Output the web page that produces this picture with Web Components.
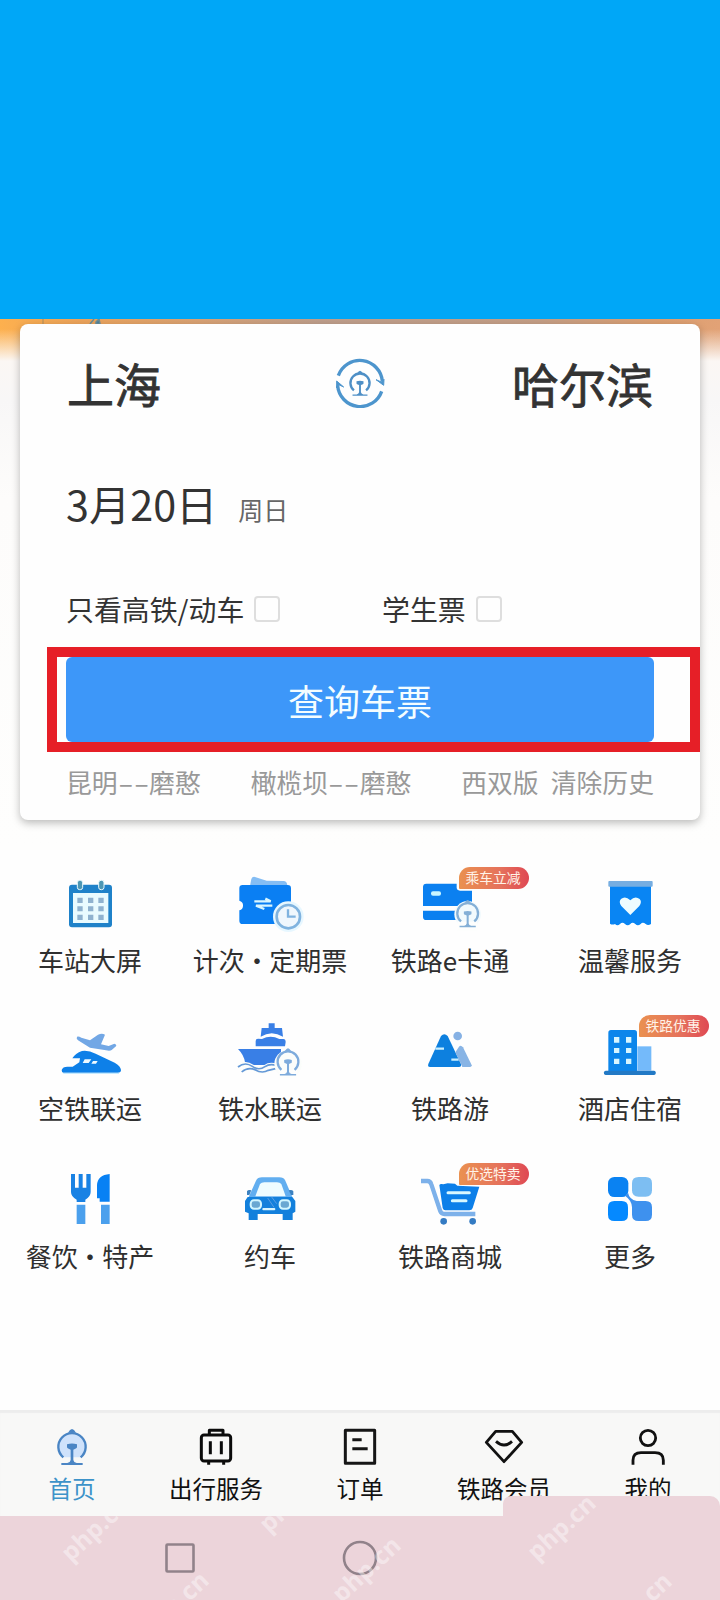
<!DOCTYPE html>
<html lang="zh-CN">
<head>
<meta charset="utf-8">
<title>铁路购票</title>
<style>
html,body{margin:0;padding:0}
body{width:720px;height:1600px;overflow:hidden;background:#fefefe;font-family:"Noto Sans CJK SC","Noto Sans",sans-serif;color:#333}
</style>
</head>
<body>
<rail-app></rail-app>
<script>
const define = (name, html, setup) => {
  const t = document.createElement('template');
  t.innerHTML = html;
  customElements.define(name, class extends HTMLElement {
    constructor() {
      super();
      this.attachShadow({mode: 'open'}).appendChild(t.content.cloneNode(true));
    }
    connectedCallback() { if (setup) setup(this, this.shadowRoot); }
  });
};

/* Railway emblem, drawn round the origin, 90 units wide */
const emblem = (x, y, s, c, fill = 'none', w = 8) => `<g transform="translate(${x} ${y}) scale(${s})" fill="none" stroke="${c}" stroke-width="${w}"><path d="M-26 32A41 41 0 1 1 26 32" fill="${fill}"/><path d="M-12-42Q0-64 12-42Z" fill="${c}" stroke="none"/><path d="M-15-7Q0-12 15-7V2Q15 5 10 6L4 9V40Q5 47 14 49H32V55H-32V49H-14Q-5 47-4 40V9L-10 6Q-15 5-15 2Z" fill="${c}" stroke="none"/></g>`;

const ICONS = {
  calendar: ['150 60', `<rect x="207" y="104" width="129" height="128" rx="9" fill="#1f82c9"/><path d="M219 129H325V219H219Z" fill="#e9fbff"/><g fill="#8fb2cf"><path d="M232 143h16v16h-16zM264 143h16v16h-16zM295 143h16v16h-16zM232 169h16v15h-16zM264 169h16v15h-16zM295 169h16v15h-16zM232 194h16v16h-16zM264 194h16v16h-16zM295 194h16v16h-16z"/></g><g fill="#4d97b4" stroke="#e9fbff" stroke-width="3"><rect x="232" y="91" width="16" height="28" rx="7"/><rect x="296" y="91" width="16" height="28" rx="7"/></g>`],
  tickets: ['690 60', `<path d="M750 108L754 87Q757 79 765 81L800 92L852 93Q862 94 862 108V112H750Z" fill="#84bdf4"/><path d="M728 105H863Q873 105 873 115V222H728Q718 222 718 212V181A15 15 0 0 0 718 152V115Q718 105 728 105Z" fill="#0a7ff3"/><path d="M763 154H812L796 146M817 167H768L793 177" fill="none" stroke="#d9f6ff" stroke-width="7"/><circle cx="865" cy="200" r="46" fill="#e7f7ff"/><circle cx="865" cy="200" r="35" fill="#f0f7fd" stroke="#80b3df" stroke-width="8"/><path d="M864 178V200H887" fill="none" stroke="#80b3df" stroke-width="7"/>`],
  card: ['150 60', `<path d="M199 101H326Q336 101 336 111V168H189V111Q189 101 199 101ZM189 182H310V210H199Q189 210 189 200Z" fill="#0b80f0"/><path d="M290 60H510V122H300Q290 122 290 112Z" fill="#fefefd"/><rect x="213" y="124" width="30" height="13" rx="6" fill="#c9f5ff"/><circle cx="323" cy="193" r="40" fill="#f2fafd"/><path d="M292 215H352V242H292Z" fill="#fdfefd"/>${emblem(323,190,.76,'#84afd6','none',9)}`],
  heart: ['690 60', `<path d="M750 105H873V222Q864 228 857 222Q848 215 842 222Q833 230 826 222Q817 215 811 222Q803 230 795 222Q787 215 780 222Q772 230 765 222Q757 226 750 221Z" fill="#0985f3"/><rect x="745" y="93" width="133" height="17" rx="3" fill="#77aee1"/><path d="M811 195L784 168Q775 155 783 147Q796 136 811 151Q825 136 839 147Q847 155 838 168Z" fill="#eefcff"/>`],
  train: ['150 54', `<path d="M231 110Q236 108 244 113L270 121L294 104Q306 99 315 104L303 133L326 138L343 131Q351 133 348 139L335 150Q330 154 318 151L270 143L234 121Q228 116 231 110Z" fill="#72a7e5"/><path d="M185 210Q188 200 202 200H218L238 187L240 175H217Q226 160 246 153Q265 150 287 161L344 188Q362 198 363 210Q363 218 353 218H190Q185 218 185 210Z" fill="#0e80e8"/><path d="M254 178H274L266 189H248ZM279 183H293L288 191H274Z" fill="#effaff"/><path d="M190 220H357" stroke="#b8e6ff" stroke-width="3"/>`],
  ship: ['690 54', `<g fill="#397fe6"><path d="M806 70H824V84H846L849 110Q815 89 782 110L785 84H806Z"/><path d="M767 123Q767 116 774 116L786 117Q812 103 838 117H850Q857 117 857 126L855 139H767Z"/><path d="M714 147H843V188L812 195H757L735 187Q732 165 714 147Z"/></g><path d="M714 201Q735 184 757 199Q776 213 795 200Q810 190 830 197M725 216Q743 200 765 209Q786 222 805 211L830 205" fill="none" stroke="#fbfdfb" stroke-width="11"/><path d="M714 201Q735 184 757 199Q776 213 795 200Q810 190 830 197M725 216Q743 200 765 209Q786 222 805 211L830 205" fill="none" stroke="#6498d7" stroke-width="5"/><circle cx="864" cy="192" r="41" fill="#fbfdfb"/><path d="M836 210H892V232H836Z" fill="#fefefd"/>${emblem(864,185,.76,'#7eabdc','none',9)}`],
  mountain: ['150 54', `<path d="M243 108Q253 97 263 108L303 192Q305 201 297 201H210Q202 201 205 192Z" fill="#0d80df"/><path d="M226 146H252M274 179H296" stroke="#c8eeff" stroke-width="7"/><circle cx="293" cy="108" r="13" fill="#86b1e4"/><path d="M286 157L297 140Q302 133 309 142L336 197L331 201H307Z" fill="#88b4e5"/>`],
  hotel: ['690 54', `<path d="M832 139H874V212H832Z" fill="#74bafa"/><rect x="745" y="90" width="86" height="130" rx="8" fill="#0c86eb"/><rect x="732" y="212" width="155" height="13" rx="5" fill="#2279c5"/><path d="M762 111h16v17h-16zM798 111h16v17h-16zM762 144h16v15h-16zM798 144h16v15h-16zM762 176h16v16h-16zM798 176h16v16h-16z" fill="#d8f6ff"/>`],
  food: ['150 48', `<path d="M213 72H225V113H236V72H248V113H259V72H272V126Q272 140 256 149V156H230V149Q213 140 213 126Z" fill="#1982e4"/><path d="M329 72V155H299V145H291V105Q293 75 329 72Z" fill="#0881f4"/><path d="M230 164H256V222H230ZM303 164H329V222H303Z" fill="#4ba0ed"/>`],
  car: ['690 48', `<path d="M746 141L768 92Q773 82 786 82H838Q851 82 856 92L877 141Z" fill="#62aef0"/><path d="M766 139L780 102Q784 97 793 97H831Q840 97 844 102L857 139Z" fill="#effcff"/><path d="M741 124Q744 118 754 121L748 135H741ZM880 124Q876 118 866 121L873 135H880Z" fill="#3c82c1"/><path d="M743 141H877L886 153V185L878 190V210H848V192H773V210H746V190L735 185V153Z" fill="#1380dc"/><g fill="#6aa7d2" stroke="#d2f5ff" stroke-width="6"><rect x="752" y="151" width="31" height="25" rx="10"/><rect x="839" y="151" width="31" height="25" rx="10"/></g><rect x="787" y="174" width="39" height="7" rx="3" fill="#d8f5ff"/><path d="M803 144l19 28M815 141l15 20" stroke="#5a9de3" stroke-width="3"/>`],
  cart: ['150 48', `<path d="M183 93H202Q211 93 214 103L241 184Q244 192 253 192H346" fill="none" stroke="#7db1ea" stroke-width="13" stroke-linejoin="round"/><path d="M238 105Q241 100 250 103L263 100L285 101L292 107L358 110L338 174Q336 181 328 181H256Q250 181 248 174Z" fill="#0c7fe9"/><path d="M264 128H328M277 152H318" stroke="#d9f8ff" stroke-width="9" stroke-linecap="round"/><circle cx="251" cy="214" r="10" fill="#347bc3"/><circle cx="338" cy="214" r="10" fill="#347bc3"/>`],
  more: ['690 48', `<rect x="744" y="81" width="61" height="60" rx="19" fill="#0a82f2"/><path d="M836 81H857Q876 81 876 100V121Q876 140 857 140H836Q816 140 816 121V100Q816 81 836 81Z" fill="#7dbef2"/><path d="M763 153H785Q804 153 804 172V194Q804 213 785 213H763Q744 213 744 194V172Q744 153 763 153Z" fill="#0589ff"/><path d="M795 137L804 128Q808 148 830 153H857Q876 153 876 172V194Q876 213 857 213H836Q816 213 816 194V172Q816 152 795 137Z" fill="#3e91ee"/>`]
};

const TABS = {
  home: ['0', emblem(216,140,1,'#4a85c4','#cfe2fb',7)],
  luggage: ['432', `<g fill="none" stroke="#0b0b0b" stroke-width="9" stroke-linejoin="round"><rect x="604" y="105" width="88" height="78" rx="8"/><path d="M628 104V91H669V104M626 185V194M671 185V194M631 124V163M664 124V163"/></g>`],
  order: ['864', `<g fill="none" stroke="#161616" stroke-width="9" stroke-linejoin="round"><path d="M1036 91H1124V190H1036ZM1057 119H1085M1057 146H1103"/></g>`],
  member: ['1296', `<g fill="none" stroke="#111" stroke-width="8.500" stroke-linejoin="round"><path d="M1487 94H1537L1565 127L1512 185L1459 127Z"/><path d="M1488 124Q1512 146 1536 124"/></g>`],
  mine: ['1728', `<g fill="none" stroke="#111" stroke-width="8.500"><circle cx="1944" cy="114" r="23"/><path d="M1899 194V181Q1899 158 1923 158H1965Q1990 158 1990 181V194"/></g>`]
};

define('service-item', `<style>
:host{display:flex;flex-direction:column;align-items:center;height:148px;box-sizing:border-box;padding-top:20px;position:relative}
svg{display:block;width:80px;height:60px;overflow:visible}
.l{margin-top:10px;font-size:26px;line-height:40px;white-space:pre;word-spacing:-6.500px;color:#2f2f2f}
.b{position:absolute;left:99px;top:17px;width:70px;height:22px;border-radius:11px 11px 11px 1px;background:linear-gradient(90deg,#ea9150,#e5715c 60%,#df4853);color:#fff3e8;font-size:13.8px;line-height:20.5px;text-align:center;box-sizing:border-box;padding-right:2px;white-space:nowrap}
.b[hidden]{display:none}
</style><svg></svg><span class="l"><slot></slot></span><span class="b" hidden></span>`, (h, r) => {
  const [o, art] = ICONS[h.getAttribute('icon')];
  const s = r.querySelector('svg');
  s.setAttribute('viewBox', o + ' 240 180');
  s.innerHTML = art;
  const b = h.getAttribute('badge');
  if (b) { const e = r.querySelector('.b'); e.hidden = false; e.textContent = b; }
});

define('tab-item', `<style>
:host{display:flex;flex-direction:column;align-items:center;width:144px;color:#111}
:host([active]){color:#3d93c9}
svg{display:block;width:144px;height:40px;overflow:visible}
span{font-size:23.5px;line-height:34px;margin-top:6px;white-space:nowrap}
</style><svg></svg><span><slot></slot></span>`, (h, r) => {
  const [x, art] = TABS[h.getAttribute('icon')];
  const s = r.querySelector('svg');
  s.setAttribute('viewBox', x + ' 75 432 120');
  s.innerHTML = art;
});

define('check-option', `<style>
:host{display:flex;align-items:center;font-size:27.9px;line-height:41px;color:#333;white-space:nowrap}
span{position:relative;top:1px}
i{width:26px;height:26px;box-sizing:border-box;border:2px solid #dedede;border-radius:4px;margin-left:10px}
</style><span><slot></slot></span><i></i>`);

define('swap-button', `<style>:host{display:block;width:50px;height:50px}svg{display:block}</style>
<svg width="50" height="50" viewBox="75 55 150 150"><g fill="none" stroke="#4d95cd" stroke-width="10"><path d="M85 108A68 68 0 0 1 217 125M215 155A68 68 0 0 1 83 138"/></g><path d="M198 120L221 137L222 119L214 127ZM101 142L80 124V145L88 136Z" fill="#4d95cd" stroke="#4d95cd" stroke-width="3"/>${emblem(150,130,.7,'#4e8fc6','none',10)}</svg>`);

define('ticket-search', `<style>
:host{display:flex;flex-direction:column;box-sizing:border-box;width:680px;height:496px;margin:5px 0 0 20px;padding:0 46px;background:#fefefe;border-radius:8px;box-shadow:0 3px 8px rgba(0,0,0,.27);position:relative}
.city{display:flex;justify-content:space-between;align-items:center;height:118px;font-size:47px;line-height:60px}
.city span{width:189px;padding-left:1px;font-weight:400;-webkit-text-stroke:.8px #333}
.city span:last-child{text-align:right;padding:0 1px 0 0}
.date{display:flex;align-items:baseline;margin-top:31px;height:60px;line-height:60px;font-size:41.3px}
.date small{font-size:25px;margin-left:21px;color:#666;line-height:40px;position:relative;top:-1px}
.opts{display:flex;height:41px;margin-top:55px}
.opts check-option:first-child{width:316px}
.go{margin-top:28px;height:85px;border-radius:6px;background:#3d97f9;color:#f4fdff;font-size:36px;line-height:86px;text-align:center}
.hist{display:flex;margin-top:20px;height:40px;font-size:25.8px;line-height:40px;color:#999;white-space:nowrap}
.hist b{display:inline-block;width:31.500px;font-weight:400;transform:scaleX(1.75);transform-origin:0 50%}
.hist span{margin-right:50px}
.hist .cut{width:75px;margin-right:14.500px}
.hist .clear{margin:0}
.mark{position:absolute;left:27px;top:323px;width:653px;height:105px;box-sizing:border-box;border:10px solid #e61f27}
</style>
<div class="city"><span>上海</span><swap-button></swap-button><span>哈尔滨</span></div>
<div class="date">3月20日<small>周日</small></div>
<div class="opts"><check-option>只看高铁/动车</check-option><check-option>学生票</check-option></div>
<div class="go">查询车票</div>
<div class="hist"><span>昆明<b>--</b>磨憨</span><span>橄榄坝<b>--</b>磨憨</span><span class="cut">西双版</span><span class="clear">清除历史</span></div>
<div class="mark"></div>`);

define('system-nav', `<style>
:host{display:block;position:relative;height:84px;background:#ecd4da;z-index:1}
svg{display:block;overflow:hidden}
.panel{position:absolute;left:503px;top:-20px;width:217px;height:104px;background:#ecd4da;border-radius:8px 10px 0 0}
.marks{position:absolute;inset:0;overflow:hidden}
.marks.tall{top:-20px;left:503px}
.marks span{position:absolute;width:100px;height:34px;margin:-17px 0 0 -50px;text-align:center;font:700 24.500px/34px "Open Sans",sans-serif;color:rgba(255,255,255,.42);transform:rotate(-43deg)}
</style>
<svg width="720" height="84" viewBox="0 1516 720 84" fill="none" stroke="#91828a" stroke-width="2.6"><rect x="166.500" y="1544.500" width="27" height="27" rx="1"/><circle cx="360" cy="1558" r="16"/></svg>
<div class="panel"></div>
<div class="marks"><span style="left:95px;top:12px">php.cn</span><span style="left:174px;top:88px">php.cn</span><span style="left:293px;top:-17px">php.cn</span><span style="left:366px;top:53px">php.cn</span></div>
<div class="marks tall"><span style="left:58px;top:31px">php.cn</span><span style="left:134px;top:109px">php.cn</span></div>`);

define('rail-app', `<style>
:host{display:flex;flex-direction:column;width:720px;height:1600px;overflow:hidden}
.top{height:319px;background:#00a7f7;flex:none}
.hero{display:flex;align-items:flex-start;position:relative;height:531px;flex:none;background:linear-gradient(180deg,transparent 0,transparent 10px,#fbf7f4 42px,#f8f7f7 80px,#fdfcfb 180px,#fefefd 531px),linear-gradient(90deg,#fdb04e 0,#eda45b 80px,#d9a274 200px,#bf9f8c 320px,#c59f86 540px,#dc9f70 660px,#e2a276 720px)}
.hero svg{position:absolute;left:40px;top:0}
.grid{display:grid;grid-template-columns:repeat(4,180px);height:560px;align-content:start;flex:none}
.tabs{display:flex;height:106px;box-sizing:border-box;padding-top:15px;background:#f8f8f7;flex:none;box-shadow:inset 0 3px 1px #ededed}
</style>
<div class="top"></div>
<div class="hero"><svg width="64" height="5"><path d="M3 0V5" stroke="#b8935c" stroke-width="1.200"/><path d="M50 5L54 0M56 5V3L59 0L60 5Z" fill="#4c82a4" stroke="#6c8f96" stroke-width="1.500"/></svg><ticket-search></ticket-search></div>
<div class="grid">
<service-item icon="calendar">车站大屏</service-item>
<service-item icon="tickets">计次 · 定期票</service-item>
<service-item icon="card" badge="乘车立减">铁路e卡通</service-item>
<service-item icon="heart">温馨服务</service-item>
<service-item icon="train">空铁联运</service-item>
<service-item icon="ship">铁水联运</service-item>
<service-item icon="mountain">铁路游</service-item>
<service-item icon="hotel" badge="铁路优惠">酒店住宿</service-item>
<service-item icon="food">餐饮 · 特产</service-item>
<service-item icon="car">约车</service-item>
<service-item icon="cart" badge="优选特卖">铁路商城</service-item>
<service-item icon="more">更多</service-item>
</div>
<div class="tabs">
<tab-item icon="home" active>首页</tab-item>
<tab-item icon="luggage">出行服务</tab-item>
<tab-item icon="order">订单</tab-item>
<tab-item icon="member">铁路会员</tab-item>
<tab-item icon="mine">我的</tab-item>
</div>
<system-nav></system-nav>`);
</script>
</body>
</html>
